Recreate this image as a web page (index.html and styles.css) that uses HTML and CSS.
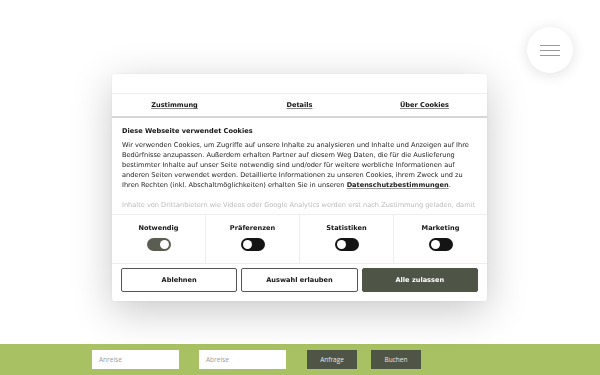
FILE: index.html
```html
<!DOCTYPE html>
<html lang="de">
<head>
  <meta charset="UTF-8" />
  <meta name="viewport" content="width=device-width, initial-scale=1.0" />
  <title>Cookies</title>
  <link rel="stylesheet" href="styles.css">
</head>
<body>
  <div class="page">
    <button class="menu-btn" aria-label="Menü">
      <span></span><span></span><span></span>
    </button>
  </div>

  <div class="booking">
    <div class="field">Anreise</div>
    <div class="field">Abreise</div>
    <button class="book-btn first">Anfrage</button>
    <button class="book-btn">Buchen</button>
  </div>

  <div class="dialog">
    <div class="dialog-head"></div>
    <div class="tabs">
      <a class="tab">Zustimmung</a>
      <a class="tab">Details</a>
      <a class="tab">Über Cookies</a>
    </div>
    <div class="dialog-body">
      <h2>Diese Webseite verwendet Cookies</h2>
      <p>Wir verwenden Cookies, um Zugriffe auf unsere Inhalte zu analysieren und Inhalte und Anzeigen auf Ihre Bedürfnisse anzupassen. Außerdem erhalten Partner auf diesem Weg Daten, die für die Auslieferung bestimmter Inhalte auf unser Seite notwendig sind und/oder für weitere werbliche Informationen auf anderen Seiten verwendet werden. Detaillierte Informationen zu unseren Cookies, ihrem Zweck und zu Ihren Rechten (inkl. Abschaltmöglichkeiten) erhalten Sie in unseren <a>Datenschutzbestimmungen</a>.</p>
      <p class="faded">Inhalte von Drittanbietern wie Videos oder Google Analytics werden erst nach Zustimmung geladen, damit</p>
    </div>
    <div class="levels">
      <div class="level">
        <span>Notwendig</span>
        <div class="toggle on"></div>
      </div>
      <div class="level">
        <span>Präferenzen</span>
        <div class="toggle"></div>
      </div>
      <div class="level">
        <span>Statistiken</span>
        <div class="toggle"></div>
      </div>
      <div class="level">
        <span>Marketing</span>
        <div class="toggle"></div>
      </div>
    </div>
    <div class="actions">
      <button class="btn">Ablehnen</button>
      <button class="btn">Auswahl erlauben</button>
      <button class="btn primary">Alle zulassen</button>
    </div>
  </div>
</body>
</html>
```

FILE: styles.css
```css
body {
  margin: 0;
  height: 100vh;
  display: flex;
  flex-direction: column;
  background: #fff;
  font-family: "DejaVu Sans", Verdana, sans-serif;
  color: #141414;
  overflow: hidden;
}
.page {
  flex: 1;
  display: flex;
  justify-content: flex-end;
  padding: 27px 27px 0 0;
}
.menu-btn {
  width: 46px;
  height: 46px;
  border-radius: 50%;
  border: none;
  background: #fff;
  box-shadow: 0 2px 14px rgba(0, 0, 0, 0.12);
  display: flex;
  flex-direction: column;
  align-items: center;
  justify-content: center;
  gap: 4px;
  padding: 0;
}
.menu-btn span {
  width: 20px;
  height: 1px;
  background: #9a9a9a;
}
.booking {
  height: 31px;
  background: #a8c163;
  display: flex;
  align-items: center;
  padding-left: 92px;
  font-family: "Open Sans", sans-serif;
}
.field {
  width: 80px;
  height: 19px;
  background: #fff;
  margin-right: 20px;
  padding-left: 7px;
  font-size: 6.5px;
  line-height: 19px;
  color: #9b9b9b;
}
.book-btn {
  width: 50px;
  height: 19px;
  border: none;
  background: #4e5446;
  color: #e5e5e5;
  font-family: "Open Sans", sans-serif;
  font-size: 6.5px;
  margin-right: 14px;
  padding: 0;
}
.book-btn.first {
  margin-left: 1px;
}
.dialog {
  position: fixed;
  top: 74px;
  left: 112px;
  width: 375px;
  background: #fff;
  border-radius: 3px;
  box-shadow: 0 10px 40px rgba(0, 0, 0, 0.22), 0 0 3px rgba(0, 0, 0, 0.06);
}
.dialog-head {
  height: 19px;
  border-bottom: 1px solid #eee;
}
.tabs {
  display: flex;
  height: 22px;
  border-bottom: 2px solid #d6d6d6;
}
.tab {
  flex: 1;
  text-align: center;
  font-size: 6.6px;
  font-weight: bold;
  line-height: 22px;
  color: #141414;
  text-decoration: underline;
  text-decoration-color: #888;
}
.dialog-body {
  padding: 8px 10px 0 10px;
  height: 88px;
  overflow: hidden;
}
.dialog-body h2 {
  margin: 0 0 4px 0;
  font-size: 6.6px;
  line-height: 10px;
}
.dialog-body p {
  margin: 0;
  font-size: 6.6px;
  line-height: 10px;
  color: #222;
}
.dialog-body a {
  font-weight: bold;
  text-decoration: underline;
  text-decoration-color: #999;
}
.dialog-body p.faded {
  margin-top: 10px;
  color: #bbb;
  filter: blur(0.7px);
  white-space: nowrap;
}
.levels {
  display: flex;
  border-top: 1px solid #eee;
  border-bottom: 1px solid #eee;
  height: 48px;
}
.level {
  flex: 1;
  display: flex;
  flex-direction: column;
  align-items: center;
  padding-top: 9px;
  gap: 6px;
  border-right: 1px solid #eee;
  font-size: 6.6px;
  font-weight: bold;
}
.level:last-child {
  border-right: none;
}
.toggle {
  width: 24px;
  height: 13px;
  border-radius: 7px;
  background: #141414;
  display: flex;
  align-items: center;
  padding: 0 2px;
  box-sizing: border-box;
}
.toggle::after {
  content: "";
  width: 9px;
  height: 9px;
  border-radius: 50%;
  background: #fff;
}
.toggle.on {
  background: #5a5e52;
  justify-content: flex-end;
}
.actions {
  display: flex;
  gap: 4px;
  padding: 4px 9px 9px 9px;
}
.btn {
  flex: 1;
  height: 24px;
  border: 1px solid #555;
  border-radius: 2px;
  background: #fff;
  font-family: "DejaVu Sans", Verdana, sans-serif;
  font-size: 6.6px;
  font-weight: bold;
  color: #141414;
}
.btn.primary {
  background: #4e5446;
  border-color: #4e5446;
  color: #fff;
}
```
